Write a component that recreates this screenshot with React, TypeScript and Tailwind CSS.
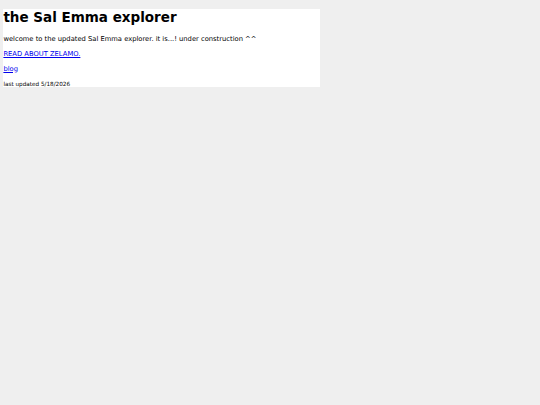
export default function App() {
  return (
    <div
      className="min-h-screen w-full bg-[#efefef] pt-[9px] pl-[3.4px]"
      style={{ fontFamily: '"DejaVu Sans", Verdana, sans-serif' }}
    >
      <div className="w-[316.5px] bg-white pb-0 text-black">
        <h1 className="m-0 text-[13.5px] font-bold leading-[normal]">the Sal Emma explorer</h1>
        <p className="mt-[10px] mb-0 text-[6.75px] leading-[normal]">
          welcome to the updated Sal Emma explorer. it is...! under construction ^^
        </p>
        <p className="mt-[6.75px] mb-0 text-[6.75px] leading-[normal]">
          <a href="#" className="text-[#0000ee] underline">READ ABOUT ZELAMO.</a>
        </p>
        <p className="mt-[6.75px] mb-0 text-[6.75px] leading-[normal]">
          <a href="#" className="text-[#0000ee] underline">blog</a>
        </p>
        <p className="mt-[8.75px] mb-0 text-[5.7px] leading-[normal]">last updated 5/18/2026</p>
      </div>
    </div>
  );
}
